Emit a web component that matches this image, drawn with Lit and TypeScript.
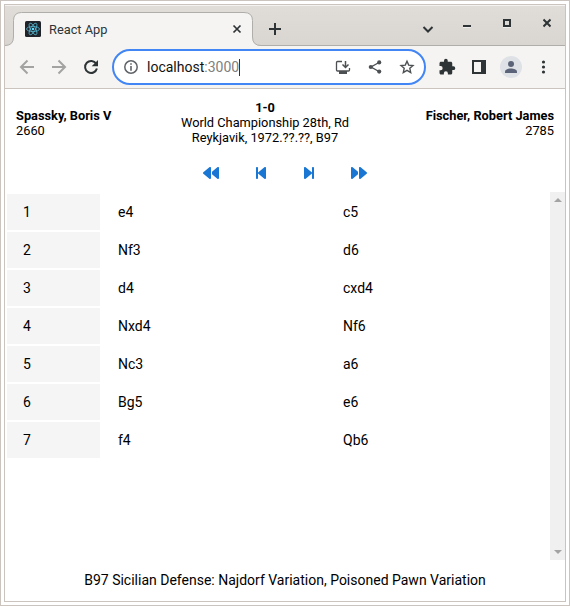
import { LitElement, html, css, svg } from "lit";
import { customElement } from "lit/decorators.js";

const moves: [string, string][] = [
  ["e4", "c5"],
  ["Nf3", "d6"],
  ["d4", "cxd4"],
  ["Nxd4", "Nf6"],
  ["Nc3", "a6"],
  ["Bg5", "e6"],
  ["f4", "Qb6"],
];

const fastPath =
  "M459.5 440.6c9.5 7.9 22.8 9.7 34.1 4.4s18.4-16.6 18.4-29V96c0-12.4-7.2-23.7-18.4-29s-24.5-3.6-34.1 4.4L288 214.3V297.7L459.5 440.6zM256 352V96c0-12.4-7.2-23.7-18.4-29s-24.5-3.6-34.1 4.4l-192 160C4.2 237.5 0 246.5 0 256s4.2 18.5 11.5 24.6l192 160c9.5 7.9 22.8 9.7 34.1 4.4s18.4-16.6 18.4-29V352z";
const stepPath =
  "M267.5 440.6c9.5 7.9 22.8 9.7 34.1 4.4s18.4-16.6 18.4-29V96c0-12.4-7.2-23.7-18.4-29s-24.5-3.6-34.1 4.4l-192 160L64 241V96c0-17.7-14.3-32-32-32S0 78.3 0 96V416c0 17.7 14.3 32 32 32s32-14.3 32-32V271l11.5 9.6 192 160z";

@customElement("browser-tabs")
export class BrowserTabs extends LitElement {
  static styles = css`
    :host {
      display: flex;
      position: relative;
      height: 41px;
      flex: none;
      background: linear-gradient(#f5f3f1 0 1px, #e0dcd8 1px, #d9d5d0 40px, #b0aeab 40px);
    }
    .shape { position: absolute; left: 0; top: 7px; }
    .row { position: relative; display: flex; align-items: center; width: 100%; height: 48px; }
    .favicon { margin-left: 20px; }
    .title { margin-left: 8px; width: 183px; font-size: 12.8px; color: #2e3436; }
    .plus { margin-left: 26px; }
    .chevron { margin-left: 140px; }
    .window { display: flex; gap: 32px; margin-left: 29px; align-self: flex-start; margin-top: 13px; }
    svg { display: block; flex: none; }
  `;
  render() {
    return html`
      <svg class="shape" width="256" height="34">
        <path d="M0 34V33.5Q8.5 33.5 8.5 25V8.500Q8.500 .5 16.500 .5H239Q247.500 .5 247.500 8.500V25Q247.500 33.500 256 33.500V34Z" fill="#f5f4f2" />
        <path d="M0 33.500Q8.500 33.500 8.500 25V8.500Q8.500 .5 16.500 .5H239Q247.500 .5 247.500 8.500V25Q247.500 33.500 256 33.500" fill="none" stroke="#b0aeab" />
      </svg>
      <div class="row">
        <svg class="favicon" width="16" height="16">
          <rect width="16" height="16" rx="1.500" fill="#20232a" />
          <g fill="none" stroke="#53b5d0" stroke-width=".8">
            ${[0, 60, 120].map((a) => svg`<ellipse cx="8" cy="8" rx="6.500" ry="2.500" transform="rotate(${a} 8 8)" />`)}
          </g>
          <circle cx="8" cy="8" r="1.300" fill="#61dafb" />
        </svg>
        <span class="title">React App</span>
        <svg class="tab-close" width="10" height="10"><path d="M1.500 1.500L8.500 8.500M8.500 1.500L1.500 8.500" stroke="#2e3436" stroke-width="1.700" /></svg>
        <svg class="plus" width="14" height="14"><path d="M7 1V13M1 7H13" stroke="#2e3436" stroke-width="2" /></svg>
        <svg class="chevron" width="12" height="10"><path d="M1.500 3L6 7.500L10.500 3" fill="none" stroke="#2e3436" stroke-width="2" /></svg>
        <div class="window">
          <svg width="8" height="10"><path d="M0 8H8" stroke="#2e3436" stroke-width="2" /><path d="M0 9.500H8" stroke="#f0eeec" /></svg>
          <svg width="8" height="10"><path d="M0 9.500H8" stroke="#f0eeec" /><rect x="1" y="2" width="6" height="6" fill="none" stroke="#2e3436" stroke-width="2" /></svg>
          <svg width="8" height="10"><path d="M.5 1.500L7.500 8.500M7.500 1.500L.5 8.500" stroke="#2e3436" stroke-width="2" /></svg>
        </div>
      </div>
    `;
  }
}

@customElement("browser-toolbar")
export class BrowserToolbar extends LitElement {
  static styles = css`
    :host {
      display: flex;
      align-items: center;
      box-sizing: border-box;
      height: 43px;
      flex: none;
      background: #f5f4f2;
      border-bottom: 1px solid #cbc4be;
    }
    svg { display: block; flex: none; }
    .nav { display: flex; gap: 14px; margin-left: 13px; }
    .address {
      display: flex;
      align-items: center;
      box-sizing: border-box;
      width: 314px;
      height: 36px;
      margin-left: 12px;
      padding: 0 8px;
      border: 2px solid #4285f4;
      border-radius: 18px;
      background: #fff;
    }
    .url { margin-left: 7px; font-size: 14px; line-height: 18px; color: #111; }
    .port { color: #808080; }
    .caret { width: 1px; height: 17px; background: #333; }
    .actions { display: flex; gap: 14px; margin-left: auto; }
    .tools { display: flex; align-items: center; margin-left: 12px; }
    .avatar { margin-left: 12px; }
    .panel { margin-left: 16px; }
    .menu { margin-left: 13px; }
  `;
  render() {
    return html`
      <div class="nav">
        <svg width="18" height="18" fill="none" stroke="#a3a4a2" stroke-width="2"><path d="M16 9H3.500M9.500 2.500L3 9L9.500 15.500" /></svg>
        <svg width="18" height="18" fill="none" stroke="#a3a4a2" stroke-width="2"><path d="M2 9H14.500M8.500 2.500L15 9L8.500 15.500" /></svg>
        <svg width="18" height="18"><path d="M14.200 5.800A6 6 0 1 0 14.900 10.500" fill="none" stroke="#2e3436" stroke-width="2" /><path d="M16 2V8.300H9.700Z" fill="#2e3436" /></svg>
      </div>
      <div class="address">
        <svg width="18" height="18"><circle cx="9" cy="9" r="6.200" fill="none" stroke="#5f6368" stroke-width="1.500" /><path d="M8.200 5.200H9.800V6.800H8.200ZM8.200 8H9.800V12.700H8.200Z" fill="#5f6368" /></svg>
        <span class="url">localhost<span class="port">:3000</span></span>
        <span class="caret"></span>
        <div class="actions">
          <svg width="18" height="18"><path d="M8 3.500H3.500Q2.500 3.500 2.500 4.500V12Q2.500 13 3.500 13H14.500Q15.500 13 15.500 12V10" fill="none" stroke="#4d5052" stroke-width="1.300" /><path d="M5 13H13V16H5Z" fill="#4d5052" /><path d="M11.500 3V9M8.500 6.500L11.500 9.500L14.500 6.500" fill="none" stroke="#4d5052" stroke-width="1.500" /></svg>
          <svg width="18" height="18" fill="#4d5052"><path d="M13 4.500L5 9L13 13.500" fill="none" stroke="#4d5052" stroke-width="1.400" /><circle cx="13.200" cy="4.400" r="2.100" /><circle cx="4.800" cy="9" r="2.100" /><circle cx="13.200" cy="13.600" r="2.100" /></svg>
          <svg width="18" height="18"><path d="M9 3.200L10.700 7.100L15 7.500L11.800 10.300L12.700 14.500L9 12.300L5.300 14.500L6.200 10.300L3 7.500L7.300 7.100Z" fill="none" stroke="#4d5052" stroke-width="1.400" /></svg>
        </div>
      </div>
      <div class="tools">
        <svg width="18" height="18" viewBox="0 0 24 24"><path d="M20.500 11H19V7c0-1.100-.9-2-2-2h-4V3.500a2.500 2.500 0 0 0-5 0V5H4c-1.100 0-2 .9-2 2v3.800h1.500a2.700 2.700 0 0 1 0 5.400H2V20c0 1.100.9 2 2 2h3.800v-1.500a2.700 2.700 0 0 1 5.400 0V22H17c1.100 0 2-.9 2-2v-4h1.500a2.500 2.500 0 0 0 0-5z" fill="#2e3436" /></svg>
        <svg class="panel" width="14" height="14"><path fill-rule="evenodd" d="M0 0H14V14H0ZM2 2V12H9V2Z" fill="#2e3436" /></svg>
        <svg class="avatar" width="24" height="24"><circle cx="13" cy="12" r="11" fill="#dee1e6" /><circle cx="13" cy="9" r="3" fill="#5a6378" /><path d="M7 18V16.500C7 14.500 10.500 13.500 13 13.500S19 14.500 19 16.500V18Z" fill="#5a6378" /></svg>
        <svg class="menu" width="18" height="18" fill="#2e3436"><circle cx="8.500" cy="4" r="1.600" /><circle cx="8.500" cy="9" r="1.600" /><circle cx="8.500" cy="14" r="1.600" /></svg>
      </div>
    `;
  }
}

@customElement("game-viewer")
export class GameViewer extends LitElement {
  static styles = css`
    :host { display: flex; flex-direction: column; flex: 1; min-height: 0; background: #fff; color: #000; }
    .header { display: flex; height: 45px; margin-top: 11px; padding: 0 11px; font-size: 12.8px; line-height: 15px; }
    .side { flex: 1; padding-top: 8px; white-space: nowrap; }
    .black { text-align: right; }
    .event { flex: none; width: 170px; text-align: center; white-space: nowrap; }
    .left { flex: none; width: 164px; }
    b { font-weight: 700; }
    .controls { display: flex; justify-content: center; margin-top: 20px; height: 16px; fill: #1976d2; }
    .controls svg { display: block; flex: none; }
    .back { margin-left: 37px; }
    .forward { margin: 0 37px 0 38px; }
    .flip { transform: scaleX(-1); }
    .list { display: flex; height: 368px; margin-top: 11px; }
    .moves {
      flex: 1;
      display: grid;
      grid-template-columns: 93px 223px 1fr;
      grid-auto-rows: 36px;
      align-content: start;
      gap: 2px;
      padding: 2px;
      font-size: 14px;
      line-height: 36px;
    }
    .cell { padding: 0 16px; }
    .number { background: #f5f5f5; }
    .scroll { display: flex; flex-direction: column; justify-content: space-between; align-items: center; width: 15px; background: #f0f0f0; box-sizing: border-box; padding: 6px 0; }
    .opening { margin-top: 12px; text-align: center; font-size: 14px; line-height: 16px; }
  `;
  render() {
    return html`
      <div class="header">
        <div class="side left"><b>Spassky, Boris V</b><br />2660</div>
        <div class="event"><b>1-0</b><br />World Championship 28th, Rd<br />Reykjavik, 1972.??.??, B97</div>
        <div class="side black"><b>Fischer, Robert James</b><br />2785</div>
      </div>
      <div class="controls">
        <svg width="16" height="16" viewBox="0 0 512 512"><path d=${fastPath} /></svg>
        <svg class="back" width="10" height="16" viewBox="0 0 320 512"><path d=${stepPath} /></svg>
        <svg class="forward flip" width="10" height="16" viewBox="0 0 320 512"><path d=${stepPath} /></svg>
        <svg class="flip" width="16" height="16" viewBox="0 0 512 512"><path d=${fastPath} /></svg>
      </div>
      <div class="list">
        <div class="moves">
          ${moves.map(
            ([white, black], i) => html`
              <div class="cell number">${i + 1}</div>
              <div class="cell">${white}</div>
              <div class="cell">${black}</div>
            `
          )}
        </div>
        <div class="scroll">
          <svg width="8" height="4"><path d="M4 0L8 4H0Z" fill="#a3a3a3" /></svg>
          <svg width="8" height="4"><path d="M0 0H8L4 4Z" fill="#a3a3a3" /></svg>
        </div>
      </div>
      <div class="opening">B97 Sicilian Defense: Najdorf Variation, Poisoned Pawn Variation</div>
    `;
  }
}

@customElement("app-root")
export class AppRoot extends LitElement {
  static styles = css`
    :host {
      display: block;
      box-sizing: border-box;
      height: 606px;
      padding: 3px;
      border: 1px solid #cbc4be;
      background: #fff;
      font-family: Roboto, "Liberation Sans", sans-serif;
    }
    .frame { display: flex; flex-direction: column; box-sizing: border-box; height: 598px; border: 1px solid #cbc4be; overflow: hidden; }
  `;
  render() {
    return html`
      <div class="frame">
        <browser-tabs></browser-tabs>
        <browser-toolbar></browser-toolbar>
        <game-viewer></game-viewer>
      </div>
    `;
  }
}
